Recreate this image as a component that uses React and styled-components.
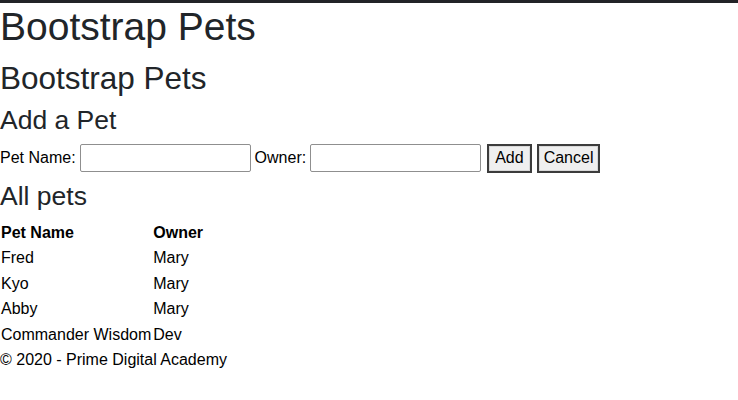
import styled, { createGlobalStyle } from 'styled-components';

const GlobalStyle = createGlobalStyle`
  html, body {
    margin: 0;
    padding: 0;
    background: #fff;
  }
  body {
    font-family: "Liberation Sans", Arial, sans-serif;
    font-size: 16px;
    line-height: 24px;
    color: #212529;
  }
  *, *::before, *::after {
    box-sizing: border-box;
  }
`;

const Page = styled.div`
  border-top: 3px solid #222327;
`;

const Title = styled.h1`
  margin: 0 0 8px;
  font-size: 39px;
  line-height: 48px;
  font-weight: 400;
`;

const SubTitle = styled.h2`
  margin: 0 0 7px;
  font-size: 31.5px;
  line-height: 38px;
  font-weight: 400;
`;

const SectionTitle = styled.h3`
  margin: 0 0 ${(p) => p.$gap || 8}px;
  font-size: 26.5px;
  line-height: 32px;
  font-weight: 400;
`;

const PetForm = styled.form`
  display: flex;
  align-items: center;
  gap: 4px;
  height: 28px;
  margin-bottom: 8px;
`;

const Label = styled.label`
  color: #000;
`;

const TextInput = styled.input`
  width: 171px;
  height: 28px;
  padding: 1px 2px;
  border: 1px solid #8f8f8f;
  border-radius: 2px;
  font: inherit;
`;

const Button = styled.button`
  height: 29px;
  padding: 0 ${(p) => (p.$first ? 6 : 5)}px;
  margin-left: ${(p) => (p.$first ? 2 : 1)}px;
  border: 2px solid #3c3c3c;
  border-radius: 0;
  background: #efefef;
  box-shadow: inset 0 0 0 1px #d8d8d8;
  font: inherit;
  color: #000;
`;

const PetTable = styled.table`
  border-collapse: collapse;
  margin-top: 6px;
`;

const HeadCell = styled.th`
  padding: 1px 1px 0;
  text-align: left;
  font-weight: 700;
  color: #000;
`;

const Cell = styled.td`
  padding: 1px 1px 0.7px;
  color: #000;
`;

const Footer = styled.footer`
  color: #000;
`;

const pets = [
  { name: 'Fred', owner: 'Mary' },
  { name: 'Kyo', owner: 'Mary' },
  { name: 'Abby', owner: 'Mary' },
  { name: 'Commander Wisdom', owner: 'Dev' },
];

export default function App() {
  return (
    <Page>
      <GlobalStyle />
      <Title>Bootstrap Pets</Title>
      <SubTitle>Bootstrap Pets</SubTitle>
      <SectionTitle>Add a Pet</SectionTitle>
      <PetForm onSubmit={(e) => e.preventDefault()}>
        <Label htmlFor="pet-name">Pet Name:</Label>
        <TextInput id="pet-name" type="text" />
        <Label htmlFor="owner">Owner:</Label>
        <TextInput id="owner" type="text" />
        <Button type="submit" $first>Add</Button>
        <Button type="button">Cancel</Button>
      </PetForm>
      <SectionTitle $gap={0}>All pets</SectionTitle>
      <PetTable>
        <thead>
          <tr>
            <HeadCell>Pet Name</HeadCell>
            <HeadCell>Owner</HeadCell>
          </tr>
        </thead>
        <tbody>
          {pets.map((pet) => (
            <tr key={pet.name}>
              <Cell>{pet.name}</Cell>
              <Cell>{pet.owner}</Cell>
            </tr>
          ))}
        </tbody>
      </PetTable>
      <Footer>© 2020 - Prime Digital Academy</Footer>
    </Page>
  );
}
